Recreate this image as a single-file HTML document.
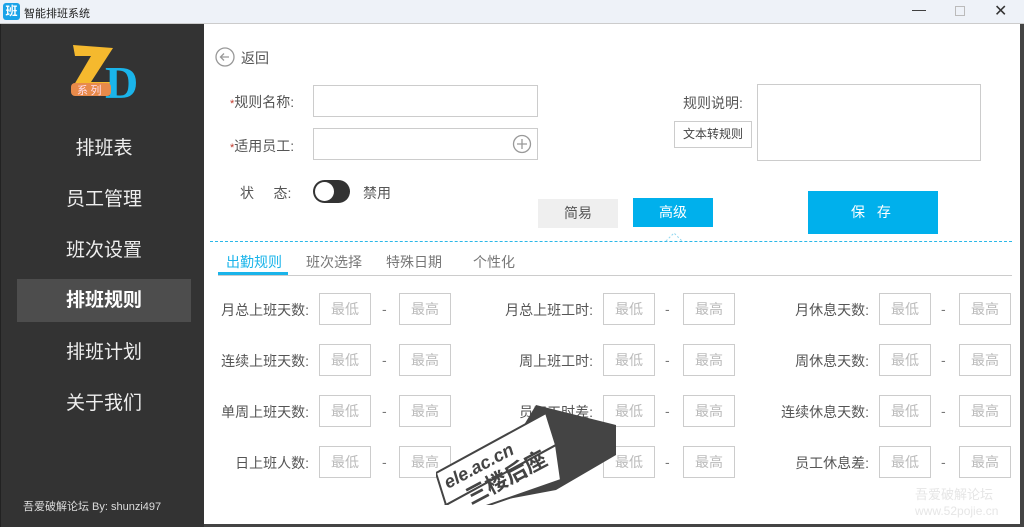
<!DOCTYPE html>
<html><head><meta charset="utf-8"><style>
*{margin:0;padding:0;box-sizing:border-box}
body{width:1024px;height:527px;overflow:hidden;background:#fff;font-family:"Liberation Sans","Noto Sans CJK SC",sans-serif;position:relative;color:#555}
.abs{position:absolute}
#title{left:0;top:0;width:1024px;height:24px;background:#eef2f8;border-bottom:1px solid #ccc}
#side{left:0;top:24px;width:204px;height:503px;background:#333;border-left:1px solid #222}
.nav{position:absolute;left:16px;width:174px;height:43px;line-height:43px;text-align:center;color:#eee;font-size:19px}
.lbl{position:absolute;font-size:14px;color:#555;text-align:right;width:120px}
.inp{position:absolute;border:1px solid #ccc;width:52px;height:32px;line-height:30px;text-align:center;color:#bbb;font-size:14px}
.dash{position:absolute;color:#777;font-size:14px}
</style></head><body>
<div id="title" class="abs">
 <div class="abs" style="left:3px;top:3px;width:17px;height:17px;background:#1aa3e8;border-radius:3px;color:#fff;font-size:12px;line-height:17px;text-align:center;font-weight:bold">班</div>
 <div class="abs" style="left:24px;top:5px;font-size:11px;color:#222">智能排班系统</div>
 <div class="abs" style="left:912px;top:1px;font-size:14px;color:#333">—</div>
 <div class="abs" style="left:955px;top:6px;width:10px;height:10px;border:1px solid #bbb"></div>
 <div class="abs" style="left:994px;top:1px;font-size:16px;color:#333">✕</div>
</div>
<div id="side" class="abs">
 <svg class="abs" style="left:66px;top:18px" width="84" height="62" viewBox="0 0 84 62">
  <polygon points="6,3 46,6 24,40 44,40 38,48 4,48 24,14 8,14" fill="#f5b92e"/>
  <text x="38" y="56" font-family="Liberation Serif,serif" font-size="46" font-weight="bold" fill="#1ab4ea">D</text>
  <rect x="4" y="41" width="40" height="13" rx="4" fill="#e88a4a"/>
  <text x="10" y="52" font-size="11" fill="#fde" font-family="Noto Sans CJK SC">系 列</text>
 </svg>
 <div class="nav" style="top:103px">排班表</div>
 <div class="nav" style="top:154px">员工管理</div>
 <div class="nav" style="top:205px">班次设置</div>
 <div class="nav" style="top:255px;background:#4d4d4d;font-weight:bold;color:#fff">排班规则</div>
 <div class="nav" style="top:307px">排班计划</div>
 <div class="nav" style="top:358px">关于我们</div>
 <div class="abs" style="left:22px;top:474px;font-size:11px;color:#ddd">吾爱破解论坛 By: shunzi497</div>
</div>
<div class="abs" style="left:1020px;top:24px;width:4px;height:503px;background:#444"></div>
<div class="abs" style="left:204px;top:524px;width:820px;height:3px;background:#444"></div>

<svg class="abs" style="left:215px;top:47px" width="20" height="20"><circle cx="10" cy="10" r="9" fill="none" stroke="#999" stroke-width="1.3"/><path d="M14 10H6M9 6.5 5.5 10 9 13.5" fill="none" stroke="#999" stroke-width="1.3"/></svg>
<div class="abs" style="left:241px;top:48px;font-size:14px">返回</div>

<div class="abs" style="left:230px;top:92px;font-size:14px"><span style="color:#c0392b;font-size:11px">*</span>规则名称:</div>
<div class="abs" style="left:313px;top:85px;width:225px;height:32px;border:1px solid #ccc"></div>
<div class="abs" style="left:230px;top:136px;font-size:14px"><span style="color:#c0392b;font-size:11px">*</span>适用员工:</div>
<div class="abs" style="left:313px;top:128px;width:225px;height:32px;border:1px solid #ccc"></div>
<svg class="abs" style="left:512px;top:134px" width="20" height="20"><circle cx="10" cy="10" r="8.5" fill="none" stroke="#999" stroke-width="1.3"/><path d="M10 5v10M5 10h10" stroke="#999" stroke-width="1.3"/></svg>
<div class="abs" style="left:240px;top:183px;font-size:14px">状 &nbsp; &nbsp; 态:</div>
<div class="abs" style="left:313px;top:180px;width:37px;height:23px;border-radius:12px;background:#333"></div>
<div class="abs" style="left:315px;top:182px;width:19px;height:19px;border-radius:50%;background:#fff"></div>
<div class="abs" style="left:363px;top:183px;font-size:14px">禁用</div>

<div class="abs" style="left:683px;top:93px;font-size:14px">规则说明:</div>
<div class="abs" style="left:674px;top:121px;width:78px;height:27px;border:1px solid #ccc;font-size:12px;line-height:25px;text-align:center;color:#444">文本转规则</div>
<div class="abs" style="left:757px;top:84px;width:224px;height:77px;border:1px solid #ccc"></div>

<div class="abs" style="left:538px;top:199px;width:80px;height:29px;background:#efefef;font-size:14px;line-height:29px;text-align:center">简易</div>
<div class="abs" style="left:633px;top:198px;width:80px;height:29px;background:#00b0ec;color:#fff;font-size:14px;line-height:29px;text-align:center">高级</div>
<div class="abs" style="left:808px;top:191px;width:130px;height:43px;background:#00b0ec;color:#fff;font-size:14px;line-height:43px;text-align:center;letter-spacing:4px">保&nbsp;存</div>
<div class="abs" style="left:210px;top:241px;width:802px;border-top:1px dashed #2bb8e8"></div>
<svg class="abs" style="left:664px;top:230px" width="20" height="12"><path d="M2 11 10 3 18 11" fill="none" stroke="#8fd6f0" stroke-dasharray="2 2"/></svg>

<div class="abs" style="left:218px;top:275px;width:794px;border-top:1px solid #ccc"></div>
<div class="abs" style="left:218px;top:272px;width:70px;height:3px;background:#1ab4ea"></div>
<div class="abs" style="left:226px;top:252px;font-size:14px;color:#1ab4ea">出勤规则</div>
<div class="abs" style="left:306px;top:252px;font-size:14px;color:#777">班次选择</div>
<div class="abs" style="left:386px;top:252px;font-size:14px;color:#777">特殊日期</div>
<div class="abs" style="left:473px;top:252px;font-size:14px;color:#777">个性化</div>

<div class="lbl" style="left:189px;top:300px">月总上班天数:</div>
<div class="lbl" style="left:473px;top:300px">月总上班工时:</div>
<div class="lbl" style="left:749px;top:300px">月休息天数:</div>
<div class="lbl" style="left:189px;top:351px">连续上班天数:</div>
<div class="lbl" style="left:473px;top:351px">周上班工时:</div>
<div class="lbl" style="left:749px;top:351px">周休息天数:</div>
<div class="lbl" style="left:189px;top:402px">单周上班天数:</div>
<div class="lbl" style="left:473px;top:402px">员工工时差:</div>
<div class="lbl" style="left:749px;top:402px">连续休息天数:</div>
<div class="lbl" style="left:189px;top:453px">日上班人数:</div>
<div class="lbl" style="left:473px;top:453px">员工天数差:</div>
<div class="lbl" style="left:749px;top:453px">员工休息差:</div>

<div id="grid"></div>
<script>
var g='';[293,344,395,446].forEach(function(y){[[319,399,382],[603,683,665],[879,959,941]].forEach(function(c){
g+='<div class="inp" style="left:'+c[0]+'px;top:'+y+'px">最低</div><div class="inp" style="left:'+c[1]+'px;top:'+y+'px">最高</div><div class="dash" style="left:'+c[2]+'px;top:'+(y+8)+'px">-</div>';});});
document.getElementById('grid').innerHTML=g;
</script>

<svg class="abs" style="left:436px;top:405px" width="200" height="100" viewBox="0 0 200 100">
 <polygon points="100,0 180,20 180,50 120,85 40,100" fill="#444"/>
 <polygon points="0,68 110,8 120,40 10,100" fill="#fff" stroke="#444" stroke-width="2"/>
 <polygon points="10,100 120,40 125,75 30,108" fill="#fff" stroke="#444" stroke-width="2"/>
 <text x="12" y="84" transform="rotate(-28 12 84)" font-size="18" font-weight="bold" font-style="italic" fill="#444" font-family="Liberation Sans">ele.ac.cn</text>
 <text x="35" y="100" transform="rotate(-28 35 100)" font-size="22" font-weight="bold" fill="#444" font-family="Noto Sans CJK SC">三楼后座</text>
</svg>
<div class="abs" style="left:915px;top:484px;font-size:13px;color:#e6e6e6">吾爱破解论坛</div>
<div class="abs" style="left:915px;top:504px;font-size:12px;color:#e6e6e6">www.52pojie.cn</div>
</body></html>
